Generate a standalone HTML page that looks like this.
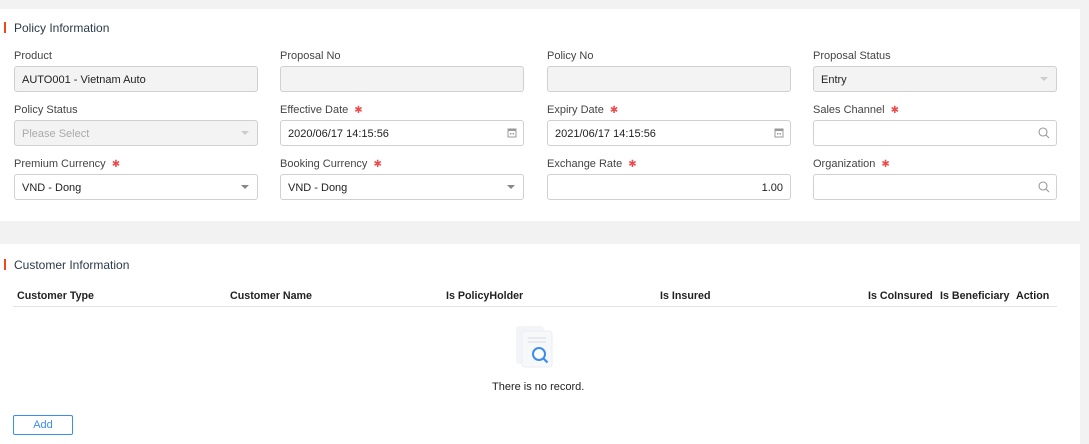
<!DOCTYPE html>
<html><head><meta charset="utf-8"><style>
*{box-sizing:border-box;margin:0;padding:0}
body{width:1089px;height:444px;background:#f2f2f2;font-family:"Liberation Sans",sans-serif;font-size:11px;color:#333;position:relative;overflow:hidden}
.panel{position:absolute;left:0;width:1080px;background:#fff}
.title{position:absolute;left:14px;font-size:12px;color:#2b3a4a}
.bar{position:absolute;left:4px;width:2px;height:11px;background:#f04a1a}
.lbl{position:absolute;color:#444;font-size:11px}
.req{color:#f04a4a;font-size:10px;margin-left:6px}
.in{position:absolute;width:244px;height:26px;border:1px solid #d0d0d0;border-radius:3px;background:#fff;padding:1px 7px 0;line-height:24px;color:#222}
.dis{background:#f3f3f3}
.ph{color:#aaa}
.caret{position:absolute;right:8px;top:10px;width:0;height:0;border-left:4px solid transparent;border-right:4px solid transparent;border-top:4px solid #888}
.dis .caret{border-top-color:#ccc}
.ico{position:absolute;right:6px;top:6px}
.th{position:absolute;top:290px;font-weight:bold;font-size:10.7px;color:#222}
</style></head><body>
<div class="panel" style="top:9px;height:212px"></div>
<div class="panel" style="top:244px;height:200px"></div>
<div class="bar" style="top:22px"></div><div class="title" style="top:21px">Policy Information</div>

<div class="lbl" style="left:14px;top:50px">Product</div>
<div class="lbl" style="left:280px;top:50px">Proposal No</div>
<div class="lbl" style="left:547px;top:50px">Policy No</div>
<div class="lbl" style="left:813px;top:50px">Proposal Status</div>
<div class="in dis" style="left:14px;top:66px">AUTO001 - Vietnam Auto</div>
<div class="in dis" style="left:280px;top:66px"></div>
<div class="in dis" style="left:547px;top:66px"></div>
<div class="in dis" style="left:813px;top:66px">Entry<span class="caret"></span></div>

<div class="lbl" style="left:14px;top:104px">Policy Status</div>
<div class="lbl" style="left:280px;top:104px">Effective Date<span class="req">✱</span></div>
<div class="lbl" style="left:547px;top:104px">Expiry Date<span class="req">✱</span></div>
<div class="lbl" style="left:813px;top:104px">Sales Channel<span class="req">✱</span></div>
<div class="in dis ph" style="left:14px;top:120px">Please Select<span class="caret"></span></div>
<div class="in" style="left:280px;top:120px">2020/06/17 14:15:56<svg class="ico" width="10" height="11" viewBox="0 0 10 11"><rect x="1" y="2" width="8" height="8" fill="none" stroke="#999"/><rect x="1" y="2" width="8" height="2" fill="#999"/><rect x="3" y="6" width="1.5" height="1.5" fill="#999"/><rect x="5.5" y="6" width="1.5" height="1.5" fill="#999"/></svg></div>
<div class="in" style="left:547px;top:120px">2021/06/17 14:15:56<svg class="ico" width="10" height="11" viewBox="0 0 10 11"><rect x="1" y="2" width="8" height="8" fill="none" stroke="#999"/><rect x="1" y="2" width="8" height="2" fill="#999"/><rect x="3" y="6" width="1.5" height="1.5" fill="#999"/><rect x="5.5" y="6" width="1.5" height="1.5" fill="#999"/></svg></div>
<div class="in" style="left:813px;top:120px"><svg class="ico" width="12" height="12" viewBox="0 0 12 12"><circle cx="5" cy="5" r="4" fill="none" stroke="#999" stroke-width="1.1"/><path d="M8 8l3 3" stroke="#999" stroke-width="1.1"/></svg></div>

<div class="lbl" style="left:14px;top:158px">Premium Currency<span class="req">✱</span></div>
<div class="lbl" style="left:280px;top:158px">Booking Currency<span class="req">✱</span></div>
<div class="lbl" style="left:547px;top:158px">Exchange Rate<span class="req">✱</span></div>
<div class="lbl" style="left:813px;top:158px">Organization<span class="req">✱</span></div>
<div class="in" style="left:14px;top:174px">VND - Dong<span class="caret"></span></div>
<div class="in" style="left:280px;top:174px">VND - Dong<span class="caret"></span></div>
<div class="in" style="left:547px;top:174px;text-align:right">1.00</div>
<div class="in" style="left:813px;top:174px"><svg class="ico" width="12" height="12" viewBox="0 0 12 12"><circle cx="5" cy="5" r="4" fill="none" stroke="#999" stroke-width="1.1"/><path d="M8 8l3 3" stroke="#999" stroke-width="1.1"/></svg></div>

<div class="bar" style="top:259px"></div><div class="title" style="top:258px">Customer Information</div>
<div class="th" style="left:17px">Customer Type</div>
<div class="th" style="left:230px">Customer Name</div>
<div class="th" style="left:446px">Is PolicyHolder</div>
<div class="th" style="left:660px">Is Insured</div>
<div class="th" style="left:868px">Is CoInsured</div>
<div class="th" style="left:940px">Is Beneficiary</div>
<div class="th" style="left:1016px">Action</div>
<div style="position:absolute;left:13px;top:306px;width:1044px;height:1px;background:#e3e3e3"></div>

<svg style="position:absolute;left:514px;top:324px" width="44" height="46" viewBox="0 0 44 46">
<rect x="2" y="2" width="28" height="38" rx="3" fill="#f3f4f7"/>
<rect x="8" y="7" width="30" height="36" rx="3" fill="#f7f8fa" stroke="#eceef2"/>
<rect x="14" y="13" width="18" height="2" fill="#e6e9ef"/><rect x="14" y="17" width="18" height="2" fill="#e6e9ef"/>
<circle cx="25" cy="30" r="6" fill="#fff" stroke="#3b8cf0" stroke-width="2"/>
<path d="M29.5 34.5l4 4" stroke="#3b8cf0" stroke-width="2.2"/>
</svg>
<div style="position:absolute;left:492px;top:381px;font-size:11px;color:#222">There is no record.</div>

<div style="position:absolute;left:13px;top:415px;width:60px;height:20px;border:1px solid #3b8cf0;border-radius:2px;color:#3b8cf0;text-align:center;line-height:19px;font-size:11px">Add</div>
</body></html>
